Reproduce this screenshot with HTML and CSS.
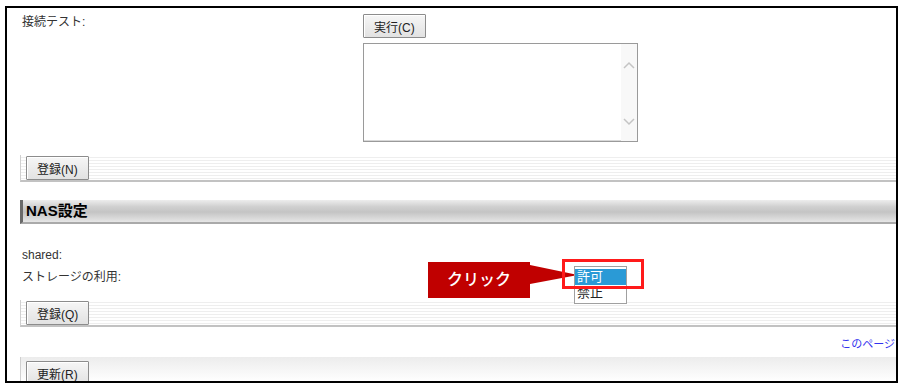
FILE: index.html
```html
<!DOCTYPE html>
<html lang="ja">
<head>
    <meta charset="UTF-8">
    <title>NAS設定</title>
    <link rel="stylesheet" href="styles.css">
</head>
<body>
    <div class="frame">
        <div class="page">
            <div class="form-row">
                <div class="label">接続テスト:</div>
                <div class="value">
                    <button class="btn">実行(C)</button>
                    <div class="textbox">
                        <div class="scroll">
                            <svg width="16" height="12" viewBox="0 0 16 12"><path d="M3 8 L8 3 L13 8" fill="none" stroke="#c4c4c4" stroke-width="1.5"/></svg>
                            <svg width="16" height="12" viewBox="0 0 16 12"><path d="M3 4 L8 9 L13 4" fill="none" stroke="#c4c4c4" stroke-width="1.5"/></svg>
                        </div>
                    </div>
                </div>
            </div>

            <div class="bar bar-first">
                <button class="btn">登録(N)</button>
            </div>

            <div class="section-head">NAS設定</div>

            <div class="fields">
                <div class="field">shared:</div>
                <div class="field">ストレージの利用:</div>
            </div>

            <div class="bar bar-second">
                <button class="btn">登録(Q)</button>
            </div>

            <div class="link-row">
                <a class="top-link" href="#">このページ</a>
            </div>

            <div class="bar bar-last">
                <button class="btn">更新(R)</button>
            </div>
        </div>

        <div class="callout">クリック</div>
        <svg class="pointer" width="50" height="24" viewBox="0 0 50 24"><polygon points="0,1 48,11 0,20" fill="#c00000"/></svg>

        <div class="dropdown">
            <div class="option selected">許可</div>
            <div class="option">禁止</div>
        </div>
        <div class="highlight"></div>
    </div>
</body>
</html>
```

FILE: styles.css
```css
body{
    margin: 0;
    padding: 6px 0 0 5px;
    background-color: #fff;
    font-family: "Liberation Sans", "Noto Sans CJK JP", sans-serif;
    font-size: 12px;
    color: #333;
}
.frame{
    position: relative;
    width: 889px;
    height: 373px;
    border: 2px solid #000;
    overflow: hidden;
}
.page{
    padding-left: 13px;
    width: 876px;
}
.form-row{
    display: flex;
    padding-top: 6px;
}
.label{
    width: 341px;
    padding-left: 2px;
    line-height: 16px;
}
.value{
    display: flex;
    flex-direction: column;
    align-items: flex-start;
}
.btn{
    height: 24px;
    padding: 0 10px;
    font-family: "Liberation Sans", "Noto Sans CJK JP", sans-serif;
    font-size: 12px;
    color: #222;
    background: linear-gradient(#f6f6f6, #e2e2e2);
    border: 1px solid #8c8c8c;
    box-shadow: inset 1px 1px 0 #fff;
    border-radius: 1px;
}
.textbox{
    display: flex;
    justify-content: flex-end;
    margin-top: 5px;
    width: 273px;
    height: 97px;
    border: 1px solid #9a9a9a;
    box-shadow: inset -1px -1px 0 #d8d8d8;
    background-color: #fff;
}
.scroll{
    width: 16px;
    display: flex;
    flex-direction: column;
    justify-content: space-between;
    padding: 16px 0 14px;
    background-color: #f8f8f8;
}
.bar{
    display: flex;
    align-items: flex-start;
    height: 25px;
    padding-left: 5px;
    border-left: 1px solid #d0d0d0;
    border-bottom: 2px solid #c2c2c2;
    background: repeating-linear-gradient(to bottom, #fff 0, #fff 2px, #eeeeee 2px, #eeeeee 3px);
}
.bar .btn{
    margin-top: 1px;
}
.bar-first{
    margin-top: 13px;
}
.section-head{
    margin-top: 18px;
    height: 22px;
    line-height: 22px;
    padding-left: 3px;
    border-left: 3px solid #6a6a6a;
    border-bottom: 2px solid #aaa;
    background: linear-gradient(#ededed, #d0d0d0 30%, #c4c4c4 55%, #e6e6e6);
    font-size: 15px;
    font-weight: bold;
    color: #000;
}
.fields{
    margin-top: 20px;
}
.field{
    padding-left: 2px;
    line-height: 22px;
}
.bar-second{
    margin-top: 12px;
}
.link-row{
    display: flex;
    justify-content: flex-end;
    margin-top: 6px;
    padding-right: 1px;
    line-height: 22px;
    font-size: 11px;
}
.top-link{
    color: #3333ee;
    text-decoration: none;
    white-space: nowrap;
}
.bar-last{
    margin-top: 2px;
    border-bottom: none;
    background: linear-gradient(#ececec, #fff);
}
.bar-last .btn{
    margin-top: 4px;
}
.callout{
    position: absolute;
    left: 421px;
    top: 254px;
    width: 102px;
    height: 36px;
    line-height: 36px;
    text-align: center;
    background-color: #c00000;
    color: #fff;
    font-size: 16px;
    font-weight: 500;
}
.pointer{
    position: absolute;
    left: 523px;
    top: 256px;
}
.dropdown{
    position: absolute;
    left: 567px;
    top: 258px;
    width: 51px;
    padding: 2px 0;
    border: 1px solid #a0a0a0;
    background-color: #fff;
}
.option{
    height: 16px;
    line-height: 16px;
    padding-left: 2px;
    font-size: 13px;
    color: #222;
}
.option.selected{
    background-color: #2a9ad6;
    color: #fff;
}
.highlight{
    position: absolute;
    left: 555px;
    top: 251px;
    width: 76px;
    height: 24px;
    border: 3px solid #ff1a1a;
}
```
